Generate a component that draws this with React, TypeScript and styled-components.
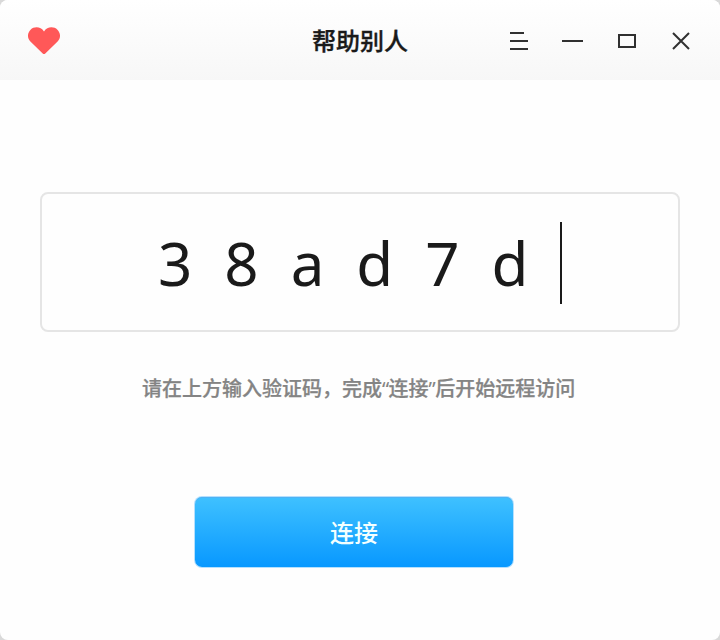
import React from "react";
import styled, { createGlobalStyle } from "styled-components";

const GlobalStyle = createGlobalStyle`
  * { box-sizing: border-box; }
  html, body { margin: 0; padding: 0; background: #d9d9d9; }
  body { font-family: "Noto Sans", "Noto Sans CJK SC", sans-serif; }
`;

const Window = styled.main`
  display: flex;
  flex-direction: column;
  width: 720px;
  height: 640px;
  overflow: hidden;
  background: #fefefe;
  border-radius: 8px;
`;

const TitleBar = styled.header`
  display: grid;
  grid-template-columns: 1fr auto 1fr;
  align-items: center;
  height: 80px;
  padding: 2px 28px 0 28px;
  background: linear-gradient(#ffffff, #f7f7f7);
`;

const Title = styled.h1`
  margin: 0;
  font-size: 24px;
  font-weight: 500;
  line-height: 36px;
  color: #1a1a1a;
  -webkit-text-stroke: 0.35px currentColor;
`;

const Controls = styled.nav`
  display: flex;
  justify-content: flex-end;
  gap: 30px;
  margin-right: -2px;
`;

const ControlButton = styled.button`
  display: block;
  width: 24px;
  height: 24px;
  padding: 0;
  border: 0;
  background: none;
  color: #303030;

  svg { display: block; }
`;

const HeartIcon = styled.svg`
  display: block;
  width: 32px;
  height: 28px;
  fill: #ff5858;
`;

const Content = styled.section`
  display: flex;
  flex-direction: column;
  padding: 112px 40px 0;
`;

const CodeField = styled.div`
  display: flex;
  align-items: center;
  height: 140px;
  padding: 2px 0 0 116px;
  border: 2px solid #e5e5e5;
  border-radius: 8px;
  background: #fefefe;
`;

const Code = styled.span`
  width: 402px;
  font-size: 60px;
  line-height: 82px;
  letter-spacing: 32px;
  white-space: nowrap;
  color: #1a1a1a;
`;

const Caret = styled.span`
  width: 2px;
  height: 82px;
  background: #1a1a1a;
`;

const Hint = styled.p`
  margin: 42px 0 0 102px;
  font-size: 20px;
  font-weight: 500;
  line-height: 30px;
  white-space: nowrap;
  color: #848484;
  -webkit-text-stroke: 0.25px currentColor;
`;

const Quote = styled.span`
  font-weight: 400;
  letter-spacing: -0.6px;
  -webkit-text-stroke: 0;
`;

const ConnectButton = styled.button`
  width: 318px;
  height: 70px;
  margin: 93px 0 0 155px;
  padding: 1px 0 0;
  border: 0;
  border-radius: 7px;
  background: linear-gradient(#3fc1ff, #0898ff);
  box-shadow: inset 0 1px #4fb2f4, 0 0 0 1px rgba(70, 180, 255, 0.4);
  font-family: inherit;
  font-size: 24px;
  font-weight: 500;
  line-height: 36px;
  color: #f3ffff;
`;

export default function App() {
  return (
    <>
      <GlobalStyle />
      <Window>
        <TitleBar>
          <HeartIcon viewBox="0 0 32 28">
            <path d="M16 4.4C12.8-.7 6-.8 2.6 2.7-.8 6.2-.9 11 2.4 14.6L14.7 26.5Q16 27.6 17.3 26.5L29.6 14.6C32.9 11 32.8 6.2 29.4 2.7 26-.8 19.2-.7 16 4.4Z" />
          </HeartIcon>
          <Title>帮助别人</Title>
          <Controls>
            <ControlButton aria-label="菜单">
              <svg width="24" height="24" fill="none" stroke="currentColor" strokeWidth="2">
                <path d="M2 4H16M2 12H20M2 20H20" />
              </svg>
            </ControlButton>
            <ControlButton aria-label="最小化">
              <svg width="24" height="24" fill="none" stroke="currentColor" strokeWidth="2">
                <path d="M0 12H21" />
              </svg>
            </ControlButton>
            <ControlButton aria-label="最大化">
              <svg width="24" height="24" fill="none" stroke="currentColor" strokeWidth="2">
                <path d="M3 6H19V18H3Z" />
              </svg>
            </ControlButton>
            <ControlButton aria-label="关闭">
              <svg width="24" height="24" fill="none" stroke="currentColor" strokeWidth="2">
                <path d="M3 4L19 20M19 4L3 20" />
              </svg>
            </ControlButton>
          </Controls>
        </TitleBar>
        <Content>
          <CodeField>
            <Code>38ad7d</Code>
            <Caret />
          </CodeField>
          <Hint>
            请在上方输入验证码，完成<Quote>“</Quote>连接<Quote>”</Quote>后开始远程访问
          </Hint>
          <ConnectButton>连接</ConnectButton>
        </Content>
      </Window>
    </>
  );
}
